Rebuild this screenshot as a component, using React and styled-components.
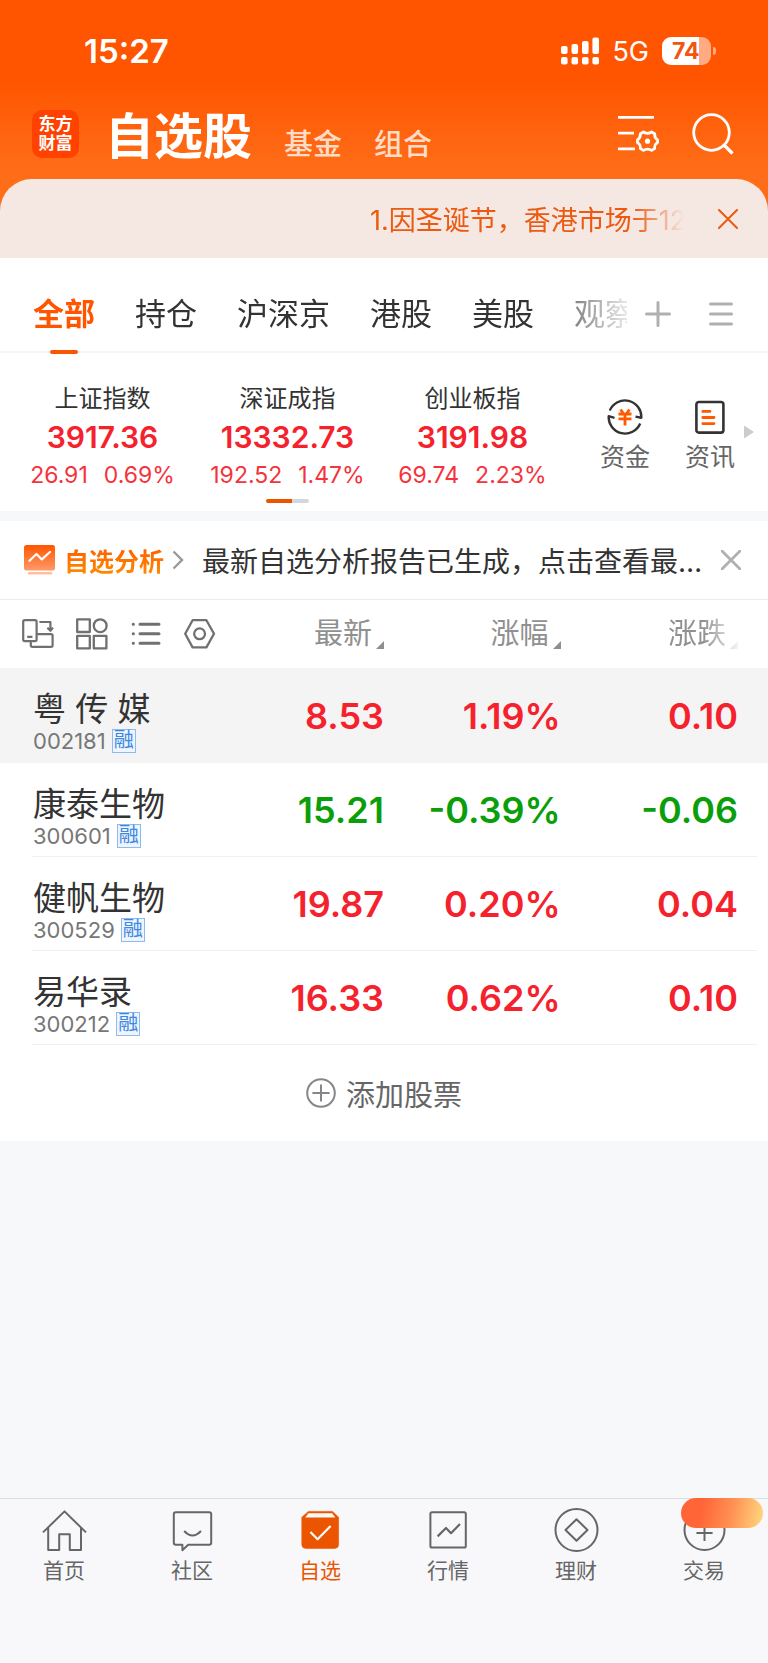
import { useState } from 'react';
import styled, { createGlobalStyle, css } from 'styled-components';

const tabs = ['全部', '持仓', '沪深京', '港股', '美股', '观察'];

const indexes = [
  { name: '上证指数', value: '3917.36', diff: '26.91', rate: '0.69%' },
  { name: '深证成指', value: '13332.73', diff: '192.52', rate: '1.47%' },
  { name: '创业板指', value: '3191.98', diff: '69.74', rate: '2.23%' },
];

const stocks = [
  { name: '粤 传 媒', code: '002181', price: '8.53', rate: '1.19%', diff: '0.10' },
  { name: '康泰生物', code: '300601', price: '15.21', rate: '-0.39%', diff: '-0.06' },
  { name: '健帆生物', code: '300529', price: '19.87', rate: '0.20%', diff: '0.04' },
  { name: '易华录', code: '300212', price: '16.33', rate: '0.62%', diff: '0.10' },
];

const CloseIcon = ({ size = 20, width = 2 }) => (
  <svg width={size} height={size} viewBox="0 0 20 20" fill="none" stroke="currentColor" strokeWidth={width} strokeLinecap="round">
    <path d="M1 1 19 19M19 1 1 19" />
  </svg>
);

const SignalIcon = () => (
  <svg width="38" height="28" viewBox="0 0 38 28" fill="currentColor">
    <rect x="0" y="9" width="6.6" height="8" rx="2" />
    <rect x="10.5" y="7" width="6.6" height="10" rx="2" />
    <rect x="21" y="4" width="6.6" height="13" rx="2" />
    <rect x="31.4" y="0.5" width="6.6" height="16.5" rx="2" />
    <rect x="0" y="20" width="6.6" height="7.4" rx="2" />
    <rect x="10.5" y="20" width="6.6" height="7.4" rx="2" />
    <rect x="21" y="20" width="6.6" height="7.4" rx="2" />
    <rect x="31.4" y="20" width="6.6" height="7.4" rx="2" />
  </svg>
);

const ListSettingIcon = () => (
  <svg width="42" height="40" viewBox="0 0 42 40" fill="none" stroke="currentColor" strokeWidth="2.8">
    <path d="M0 3.4H36M0 19.2H16M0 34.8H17" />
    <path
      strokeWidth="2.8"
      strokeLinejoin="round"
      d="M25.4 18Q29.5 20.6 33.6 18L36.6 19.8Q36.4 24 39.6 26V28.4Q36.4 30.4 36.6 34.6L33.6 36.4Q29.5 33.8 25.4 36.4L22.4 34.6Q22.6 30.4 19.4 28.4V26Q22.6 24 22.4 19.8Z"
    />
    <circle cx="29.5" cy="27.2" r="2.6" fill="currentColor" stroke="none" />
  </svg>
);

const SearchIcon = () => (
  <svg width="42" height="42" viewBox="0 0 42 42" fill="none" stroke="currentColor" strokeWidth="2.8">
    <circle cx="19.5" cy="19.5" r="17.8" />
    <path d="M32 32 40.5 40.5" strokeWidth="3.2" />
  </svg>
);

const FundIcon = () => (
  <svg width="36" height="36" viewBox="0 0 36 36" fill="none" strokeWidth="2.4" strokeLinejoin="round">
    <path stroke="#333" d="M2.8 11.5A16.4 16.4 0 0 1 34.3 18.8L28.5 17.6M33.2 24.5A16.4 16.4 0 0 1 1.7 17.2L7.5 18.8" />
    <path stroke="#ff5a00" strokeWidth="2.8" d="M13.6 10.5 16 14M22.4 10.5 20 14M11.5 15H24.5M11.5 19.8H24.5M18 14.5V26.5" />
  </svg>
);

const NewsIcon = () => (
  <svg width="36" height="36" viewBox="0 0 36 36" fill="none" strokeWidth="2.6" strokeLinecap="round">
    <rect x="4.4" y="3" width="27" height="30.6" rx="2.4" stroke="#333" />
    <path stroke="#ff5a00" strokeWidth="2.8" d="M10.8 12.4H18M10.8 18.5H22M10.8 24.6H22" />
  </svg>
);

const ReportIcon = () => (
  <svg width="32" height="32" viewBox="0 0 32 32" fill="none">
    <defs>
      <linearGradient id="report" x1="0" y1="0" x2="0" y2="1">
        <stop offset="0" stopColor="#ff5500" />
        <stop offset="1" stopColor="#ff9a6a" />
      </linearGradient>
    </defs>
    <rect x="0" y="1" width="31" height="25.5" rx="2.5" fill="url(#report)" />
    <path d="M5.5 16.8 12.5 10 17.8 15.4 26 8" stroke="#fff" strokeWidth="2.2" strokeLinecap="round" strokeLinejoin="round" />
    <path d="M5 29.3H27" stroke="#ffbf9f" strokeWidth="2.4" strokeLinecap="round" />
  </svg>
);

const RotateIcon = () => (
  <svg width="32" height="32" viewBox="0 0 32 32" fill="none" stroke="currentColor" strokeWidth="2.2" strokeLinejoin="round">
    <rect x="1.2" y="2.2" width="13.4" height="21" rx="1.6" />
    <path d="M5.2 18.8H10.4M17.4 4H28.4V12.2M25.4 9.8 28.4 12.8 31 9.8M17.4 16.2H29Q30.6 16.2 30.6 17.8V27.2Q30.6 28.8 29 28.8H10.4Q8.8 28.8 8.8 27.2V23.8M14.6 16.2H18" />
  </svg>
);

const GridIcon = () => (
  <svg width="32" height="32" viewBox="0 0 32 32" fill="none" stroke="currentColor" strokeWidth="2.3" strokeLinejoin="round">
    <rect x="1.2" y="1.4" width="12.6" height="12.6" />
    <circle cx="24.2" cy="7.7" r="6.4" />
    <rect x="1.2" y="17.8" width="12.6" height="12.6" />
    <rect x="17.8" y="17.8" width="12.6" height="12.6" />
  </svg>
);

const ListIcon = () => (
  <svg width="32" height="32" viewBox="0 0 32 32" fill="none" stroke="currentColor" strokeWidth="3" strokeLinecap="round">
    <path d="M10 6.2H29M10 15.8H29M10 25.2H29M3.2 6.2H3.4M3.2 15.8H3.4M3.2 25.2H3.4" />
  </svg>
);

const HexIcon = () => (
  <svg width="32" height="32" viewBox="0 0 32 32" fill="none" stroke="currentColor" strokeWidth="2.3" strokeLinejoin="round">
    <path d="M8.6 2.2H22.4L30 15.8 22.4 29.4H8.6L1.2 15.8Z" />
    <circle cx="15.6" cy="15.8" r="5.4" />
  </svg>
);

const SortMark = () => (
  <svg width="8" height="8" viewBox="0 0 8 8" fill="#8e8e93">
    <path d="M8 0V8H0Z" />
  </svg>
);

const navIcons = {
  首页: (
    <path d="M1 23.4 22.5 2.4 44 23.4M6.2 18.5V41H17.2V25.2H27.8V41H39V18.5" />
  ),
  社区: (
    <path d="M5.8 3.2H39.2Q41.2 3.2 41.2 5.2V33.8Q41.2 35.8 39.2 35.8H18.2L12.4 41.2V35.8H5.8Q3.8 35.8 3.8 33.8V5.2Q3.8 3.2 5.8 3.2ZM14.2 22Q22.5 31 31 22" />
  ),
  自选: (
    <>
      <path d="M10.4 2.4H34.6L40.6 8.2V35.6Q40.6 39.4 36.8 39.4H7.6Q3.8 39.4 3.8 35.6V8.2Z" fill="#eb5500" stroke="#eb5500" strokeWidth="0.6" />
      <path d="M10.4 4.2H34.2L37.4 8.6H7.2Z" fill="#f8f8fb" stroke="none" />
      <path d="M12.4 23 19.6 30.2 32.6 17" stroke="#fff" strokeWidth="2.2" />
    </>
  ),
  行情: (
    <>
      <rect x="4.4" y="3.2" width="35.4" height="35.4" rx="1.6" />
      <path d="M11.6 27.4 20 19 25 24.2 34 15" strokeWidth="2.2" />
    </>
  ),
  理财: (
    <>
      <circle cx="22.5" cy="21" r="21" />
      <path d="M22.5 10.2 33.5 21 22.5 31.8 11.5 21Z" />
    </>
  ),
  交易: (
    <>
      <circle cx="22.5" cy="21" r="20" />
      <path d="M22.5 13V32M14.4 24H30.6" />
    </>
  ),
};

const App = () => {
  const [tab, setTab] = useState('全部');
  const [page, setPage] = useState('自选');
  const [showNotice, setShowNotice] = useState(true);
  const [showReport, setShowReport] = useState(true);

  return (
    <>
      <GlobalStyle />
      <Layout>
        <Header>
          <StatusBar>
            <Clock>15:27</Clock>
            <StatusRight>
              <SignalIcon />
              <Network>5G</Network>
              <Battery>
                <BatteryBody>74</BatteryBody>
                <BatteryCap />
              </Battery>
            </StatusRight>
          </StatusBar>
          <TitleBar>
            <Logo>
              <span>东方</span>
              <span>财富</span>
            </Logo>
            <Sections>
              <Title>自选股</Title>
              <SectionLink href="#fund">基金</SectionLink>
              <SectionLink href="#group">组合</SectionLink>
            </Sections>
            <HeaderActions>
              <IconButton aria-label="设置">
                <ListSettingIcon />
              </IconButton>
              <IconButton aria-label="搜索">
                <SearchIcon />
              </IconButton>
            </HeaderActions>
          </TitleBar>
        </Header>

        {showNotice && (
          <NoticeWrap>
            <Notice>
              <NoticeText>1.因圣诞节，香港市场于12</NoticeText>
              <IconButton aria-label="关闭公告" onClick={() => setShowNotice(false)}>
                <CloseIcon />
              </IconButton>
            </Notice>
          </NoticeWrap>
        )}

        <TabBar>
          <TabList>
            {tabs.map((name) => (
              <Tab key={name} $active={name === tab} onClick={() => setTab(name)}>
                {name}
              </Tab>
            ))}
          </TabList>
          <TabActions>
            <IconButton aria-label="添加分组">
              <svg width="26" height="26" viewBox="0 0 26 26" stroke="currentColor" strokeWidth="3" strokeLinecap="round">
                <path d="M13 1.5V24.5M1.5 13H24.5" />
              </svg>
            </IconButton>
            <IconButton aria-label="分组管理">
              <svg width="24" height="26" viewBox="0 0 24 26" stroke="currentColor" strokeWidth="3" strokeLinecap="round">
                <path d="M1.5 3H22.5M1.5 13H22.5M1.5 23H22.5" />
              </svg>
            </IconButton>
          </TabActions>
        </TabBar>

        <IndexPanel>
          <IndexGroup>
            {indexes.map((item) => (
              <IndexItem key={item.name}>
                <IndexName>{item.name}</IndexName>
                <IndexValue>{item.value}</IndexValue>
                <IndexChange>
                  <span>{item.diff}</span>
                  <span>{item.rate}</span>
                </IndexChange>
              </IndexItem>
            ))}
            <Pager />
          </IndexGroup>
          <Shortcuts>
            <Shortcut href="#money">
              <FundIcon />
              资金
            </Shortcut>
            <Shortcut href="#news">
              <NewsIcon />
              资讯
            </Shortcut>
          </Shortcuts>
          <svg width="10" height="14" viewBox="0 0 10 14" fill="#ccc">
            <path d="M0 0.5 10 7 0 13.5Z" />
          </svg>
        </IndexPanel>

        {showReport && (
          <ReportBar>
            <ReportIcon />
            <ReportTitle>自选分析</ReportTitle>
            <svg width="12" height="20" viewBox="0 0 12 20" fill="none" stroke="#999" strokeWidth="2.4">
              <path d="M1.5 1.5 10 10 1.5 18.5" />
            </svg>
            <ReportText>最新自选分析报告已生成，点击查看最…</ReportText>
            <IconButton aria-label="关闭" $color="#b0b0b0" onClick={() => setShowReport(false)}>
              <CloseIcon width={2.8} />
            </IconButton>
          </ReportBar>
        )}

        <StockTable>
          <thead>
            <tr>
              <HeadCell scope="col">
                <Tools>
                  <IconButton aria-label="横屏"><RotateIcon /></IconButton>
                  <IconButton aria-label="宫格"><GridIcon /></IconButton>
                  <IconButton aria-label="列表"><ListIcon /></IconButton>
                  <IconButton aria-label="设置列"><HexIcon /></IconButton>
                </Tools>
              </HeadCell>
              <HeadCell scope="col"><SortButton>最新<SortMark /></SortButton></HeadCell>
              <HeadCell scope="col"><SortButton>涨幅<SortMark /></SortButton></HeadCell>
              <HeadCell scope="col"><SortButton $fade>涨跌<SortMark /></SortButton></HeadCell>
            </tr>
          </thead>
          <tbody>
            {stocks.map((stock, i) => (
              <StockRow key={stock.code} $pinned={i === 0}>
                <NameCell>
                  <StockName>{stock.name}</StockName>
                  <StockCode>
                    {stock.code}
                    <Badge>融</Badge>
                  </StockCode>
                </NameCell>
                <ValueCell $down={stock.diff.startsWith('-')}>{stock.price}</ValueCell>
                <ValueCell $down={stock.diff.startsWith('-')}>{stock.rate}</ValueCell>
                <ValueCell $down={stock.diff.startsWith('-')}>{stock.diff}</ValueCell>
              </StockRow>
            ))}
          </tbody>
        </StockTable>
        <AddButton>
          <svg width="30" height="30" viewBox="0 0 30 30" fill="none" stroke="#85858a" strokeWidth="2">
            <circle cx="15" cy="15" r="13.8" />
            <path d="M15 6.4V23.6M6.4 15H23.6" />
          </svg>
          添加股票
        </AddButton>

        <NavBar>
          {Object.keys(navIcons).map((name) => (
            <NavItem key={name} href={`#${name}`} $active={name === page} onClick={() => setPage(name)}>
              <svg width="45" height="43" viewBox="0 0 45 43" overflow="visible" fill="none" stroke="currentColor" strokeWidth="2" strokeLinejoin="round">
                {navIcons[name]}
              </svg>
              {name}
              {name === '交易' && <Promo />}
            </NavItem>
          ))}
        </NavBar>
      </Layout>
    </>
  );
};

const GlobalStyle = createGlobalStyle`
  * {
    box-sizing: border-box;
  }
  body {
    margin: 0;
    background: #f7f8fa;
    font-family: Inter, 'Noto Sans CJK SC', sans-serif;
    color: #333;
  }
  button {
    padding: 0;
    border: none;
    background: none;
    font: inherit;
    color: inherit;
    cursor: pointer;
  }
  a {
    color: inherit;
    text-decoration: none;
  }
  svg {
    display: block;
    flex-shrink: 0;
  }
`;

const Layout = styled.div`
  display: flex;
  flex-direction: column;
  min-height: 100vh;
`;

const Header = styled.header`
  background: linear-gradient(#ff5500 80px, #ff6d18 170px);
  color: #fff;
`;

const StatusBar = styled.div`
  display: flex;
  justify-content: space-between;
  align-items: center;
  height: 102px;
  padding: 0 52px 0 84px;
`;

const Clock = styled.div`
  font-size: 33px;
  font-weight: 600;
`;

const StatusRight = styled.div`
  display: flex;
  align-items: center;
  gap: 13px;
`;

const Network = styled.span`
  font-size: 27px;
`;

const Battery = styled.div`
  display: flex;
  align-items: center;
  gap: 2px;
`;

const BatteryBody = styled.div`
  width: 49px;
  height: 28px;
  padding-left: 10px;
  border-radius: 9px;
  background: linear-gradient(90deg, #fff 75%, #ffaa80 75%);
  color: #f0560f;
  font-size: 23px;
  font-weight: 700;
  line-height: 28px;
`;

const BatteryCap = styled.div`
  width: 3px;
  height: 8px;
  border-radius: 0 4px 4px 0;
  background: #ffaa80;
`;

const TitleBar = styled.div`
  display: flex;
  align-items: center;
  height: 77px;
  padding: 0 34px 13px 32px;
`;

const Logo = styled.div`
  display: flex;
  flex-direction: column;
  align-items: center;
  justify-content: center;
  width: 47px;
  height: 48px;
  border-radius: 10px;
  background: #ff4200;
  font-size: 17px;
  font-weight: 700;
  line-height: 19px;
`;

const Sections = styled.nav`
  display: flex;
  align-items: flex-end;
  gap: 32px;
  margin-left: 26px;
  padding-top: 6px;
`;

const Title = styled.h1`
  margin: 0;
  font-size: 49px;
  font-weight: 700;
  line-height: 56px;
`;

const SectionLink = styled.a`
  color: #ffdcc8;
  font-size: 29px;
  font-weight: 500;
  line-height: 40px;
`;

const HeaderActions = styled.div`
  display: flex;
  align-items: center;
  gap: 32px;
  margin-left: auto;
`;

const IconButton = styled.button`
  color: ${({ $color }) => $color || 'inherit'};
`;

const NoticeWrap = styled.div`
  background: #ff6d18;
`;

const Notice = styled.div`
  display: flex;
  align-items: center;
  justify-content: flex-end;
  gap: 28px;
  height: 79px;
  padding: 0 30px;
  border-radius: 32px 32px 0 0;
  background: #f5e7e2;
  color: #eb5a10;
`;

const NoticeText = styled.div`
  width: 320px;
  overflow: hidden;
  font-size: 27px;
  white-space: nowrap;
  mask-image: linear-gradient(90deg, #000 82%, transparent 98%);
`;

const TabBar = styled.div`
  display: flex;
  height: 95px;
  padding: 0 35px 0 33px;
  border-bottom: 2px solid #f3f4f6;
  background: #fff;
`;

const TabList = styled.div`
  display: flex;
  flex: 1;
  gap: 40px;
  height: 97px;
  padding-top: 20px;
  overflow: hidden;
  mask-image: linear-gradient(90deg, #000 84%, transparent 102%);
`;

const Tab = styled.button`
  display: flex;
  flex-direction: column;
  align-items: center;
  flex-shrink: 0;
  font-size: 31px;
  line-height: 72px;

  ${({ $active }) =>
    $active &&
    css`
      color: #ff5500;
      font-weight: 700;

      &::after {
        content: '';
        width: 28px;
        height: 4px;
        border-radius: 2px;
        background: #ff5500;
      }
    `}
`;

const TabActions = styled.div`
  display: flex;
  align-items: center;
  gap: 38px;
  margin-left: 18px;
  padding-top: 18px;
  color: #b0b0b0;
`;

const IndexPanel = styled.section`
  display: flex;
  align-items: center;
  height: 158px;
  padding: 0 14px 0 10px;
  background: #fff;
`;

const IndexGroup = styled.div`
  display: grid;
  grid-template-columns: repeat(3, 1fr);
  flex: 1;
  row-gap: 5px;
  padding-top: 18px;
`;

const IndexItem = styled.div`
  display: flex;
  flex-direction: column;
  align-items: center;
`;

const IndexName = styled.div`
  font-size: 24px;
  line-height: 38px;
`;

const IndexValue = styled.div`
  color: #f5222d;
  font-size: 30px;
  font-weight: 600;
  line-height: 38px;
`;

const IndexChange = styled.div`
  display: flex;
  gap: 16px;
  color: #f5333c;
  font-size: 23px;
  line-height: 38px;
`;

const Pager = styled.div`
  grid-column: 1 / -1;
  justify-self: center;
  width: 43px;
  height: 4px;
  border-radius: 2px;
  background: linear-gradient(90deg, #eb5500 60%, #d3d6dc 60%);
`;

const Shortcuts = styled.div`
  display: flex;
  gap: 35px;
  margin: 0 9px 0 35px;
  padding-top: 10px;
`;

const Shortcut = styled.a`
  display: flex;
  flex-direction: column;
  align-items: center;
  gap: 3px;
  color: #666;
  font-size: 25px;
  line-height: 38px;
`;

const ReportBar = styled.section`
  display: flex;
  align-items: center;
  height: 79px;
  margin-top: 10px;
  padding: 0 27px 0 24px;
  border-bottom: 1px solid #ececee;
  background: #fff;
`;

const ReportTitle = styled.strong`
  margin: 0 8px;
  background: linear-gradient(#ff5500, #ff9000);
  background-clip: text;
  color: transparent;
  font-size: 25px;
`;

const ReportText = styled.p`
  flex: 1;
  margin: 0 0 0 18px;
  overflow: hidden;
  font-size: 28px;
  white-space: nowrap;
`;

const StockTable = styled.table`
  width: 100%;
  border-collapse: collapse;
  table-layout: fixed;
  background: #fff;
`;

const HeadCell = styled.th`
  width: 23%;
  height: 68px;
  padding: 0;
  color: #909090;
  font-size: 29px;
  font-weight: 400;

  &:first-child {
    width: 27%;
  }
  &:last-child {
    width: 27%;
    padding-right: 30px;
  }
`;

const Tools = styled.div`
  display: flex;
  gap: 22px;
  padding-left: 22px;
  color: #707070;
`;

const SortButton = styled.button`
  display: flex;
  align-items: flex-end;
  gap: 4px;
  margin-left: auto;
  line-height: 38px;
  mask-image: ${({ $fade }) => ($fade ? 'linear-gradient(90deg, #000 50%, transparent 105%)' : 'none')};

  svg {
    margin-bottom: 4px;
  }
`;

const StockRow = styled.tr`
  height: ${({ $pinned }) => ($pinned ? '95px' : '94px')};
  background: ${({ $pinned }) =>
    $pinned ? '#f4f4f4' : 'linear-gradient(#f0f0f1, #f0f0f1) 32px 100% / calc(100% - 43px) 1px no-repeat'};
`;

const NameCell = styled.td`
  padding: 15px 0 0 33px;
  white-space: nowrap;
`;

const StockName = styled.div`
  font-size: 33px;
  line-height: 36px;
`;

const StockCode = styled.div`
  display: flex;
  align-items: center;
  gap: 6px;
  color: #777;
  font-size: 22px;
  line-height: 28px;
`;

const Badge = styled.span`
  width: 24px;
  height: 24px;
  border: 1px solid #8dbaf0;
  background: #eef5fe;
  color: #3d87de;
  font-size: 20px;
  line-height: 21px;
  text-align: center;
`;

const ValueCell = styled.td`
  padding: 0;
  color: ${({ $down }) => ($down ? '#0a9f0a' : '#f5222d')};
  font-size: 36px;
  font-weight: 600;
  text-align: right;

  &:last-child {
    padding-right: 30px;
  }
`;

const AddButton = styled.button`
  && {
    display: flex;
    align-items: center;
    justify-content: center;
    gap: 10px;
    height: 96px;
    background: #fff;
    color: #666;
    font-size: 29px;
  }
`;

const NavBar = styled.nav`
  display: flex;
  height: 165px;
  margin-top: auto;
  padding-top: 10px;
  border-top: 1px solid #dcdde1;
  background: #f8f8fb;
`;

const NavItem = styled.a`
  position: relative;
  display: flex;
  flex: 1;
  flex-direction: column;
  align-items: center;
  gap: 3px;
  color: ${({ $active }) => ($active ? '#eb5500' : '#666')};
  font-size: 21px;
  line-height: 32px;
`;

const Promo = styled.span`
  position: absolute;
  top: -11px;
  right: 5px;
  width: 82px;
  height: 30px;
  border-radius: 15px;
  background: linear-gradient(100deg, #ff6536 25%, #ff8f52 60%, #ffd980 100%);
`;

export default App;
